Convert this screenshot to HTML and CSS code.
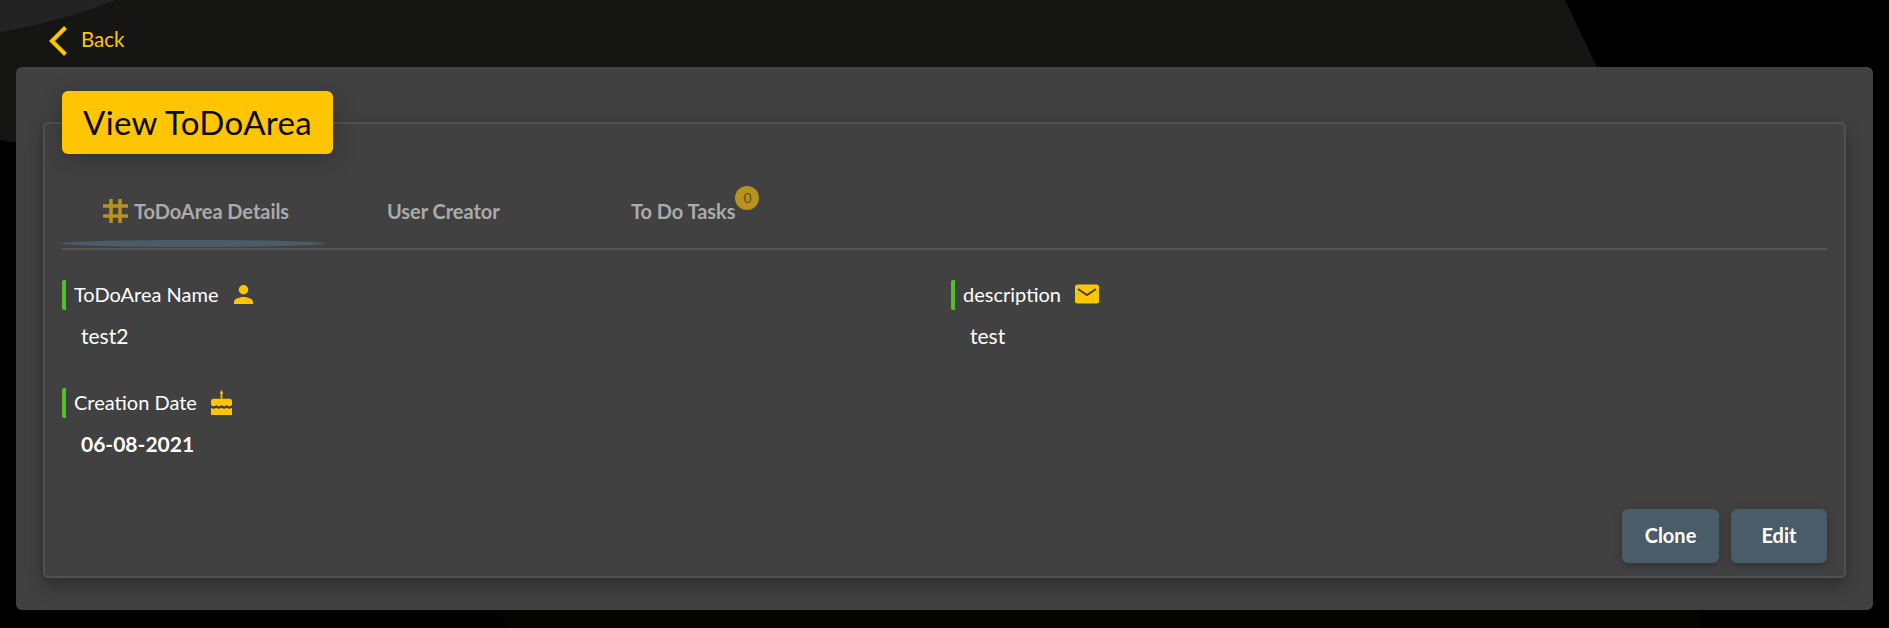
FILE: index.html
```html
<!DOCTYPE html>
<html lang="en">
<head>
<meta charset="utf-8">
<title>View ToDoArea</title>
<link rel="stylesheet" href="styles.css">
</head>
<body>
<svg class="backdrop" viewBox="0 0 1889 628" width="1889" height="628" aria-hidden="true">
  <path d="M0 0H1565L1597 67V610H495L48 147 0 140Z" fill="#151514"/>
  <path d="M495 610L510 628H1700V610Z" fill="#040403"/>
  <path d="M0 0H116C80 14 40 25 0 32Z" fill="#222322"/>
</svg>
<div class="page">
  <a class="back">
    <svg class="back-icon" viewBox="0 0 18 30" width="18" height="30"><path d="M16.500 1.500 3 15l13.500 13.500" fill="none" stroke="#ffc600" stroke-width="4.200"/></svg>
    <span>Back</span>
  </a>
  <main class="panel">
    <h1 class="title">View ToDoArea</h1>
    <section class="card">
      <nav class="tabs">
        <div class="tab tab-active">
          <svg class="tab-icon" viewBox="0 0 25 24" width="25" height="24"><path d="M8 0v24M17 0v24M0 7h25M0 17h25" fill="none" stroke="#b8931c" stroke-width="3.500"/></svg>
          <span>ToDoArea Details</span>
        </div>
        <div class="tab tab-user"><span>User Creator</span></div>
        <div class="tab tab-tasks"><span>To Do Tasks</span><b class="badge">0</b></div>
      </nav>
      <div class="fields">
        <div class="field">
          <div class="label"><span>ToDoArea Name</span>
            <svg class="icon" viewBox="4 4 16 16" width="19" height="19"><path fill="#ffc600" d="M12 12a4 4 0 1 0 0-8 4 4 0 0 0 0 8Zm0 2c-2.700 0-8 1.340-8 4v2h16v-2c0-2.660-5.300-4-8-4Z"/></svg>
          </div>
          <div class="value">test2</div>
        </div>
        <div class="field">
          <div class="label label-tight"><span>description</span>
            <svg class="icon" viewBox="0 0 24 20" width="24" height="20"><rect width="24" height="19" y="0.500" rx="2.500" fill="#ffc600"/><path d="M3 5l9 6 9-6" fill="none" stroke="#414141" stroke-width="2"/></svg>
          </div>
          <div class="value">test</div>
        </div>
        <div class="field">
          <div class="label label-tight"><span>Creation Date</span>
            <svg class="icon" viewBox="0 0 24 26" width="21" height="25" preserveAspectRatio="none"><path fill="#ffc600" d="M12 0c1 1.500 1.600 2.400 1.600 3.300a1.600 1.600 0 0 1-3.200 0C10.400 2.400 11 1.500 12 0Z"/><rect x="11" y="5" width="2" height="4" fill="#ffc600"/><path fill="#ffc600" d="M3 9h18a3 3 0 0 1 3 3v3.500c-2 2-4 2-6 0-2 2-4 2-6 0-2 2-4 2-6 0-2 2-4 2-6 0V12a3 3 0 0 1 3-3Zm-3 9.500c2 1.300 4 1.300 6 0 2 1.300 4 1.300 6 0 2 1.300 4 1.300 6 0 2 1.300 4 1.300 6 0V26H0Z"/></svg>
          </div>
          <div class="value value-strong">06-08-2021</div>
        </div>
      </div>
      <div class="actions">
        <button class="btn btn-clone">Clone</button>
        <button class="btn btn-edit">Edit</button>
      </div>
    </section>
  </main>
</div>
</body>
</html>
```
FILE: styles.css
```css
* { box-sizing: border-box; }
html, body { margin: 0; height: 100%; }
body {
  background: #000;
  font-family: "Lato", "Noto Sans", sans-serif;
  overflow: hidden;
  position: relative;
}
.backdrop { position: absolute; left: 0; top: 0; }
.page { position: relative; padding: 0 16px; }
.back {
  display: flex;
  align-items: center;
  gap: 14px;
  height: 67px;
  padding: 15px 0 0 33px;
  color: #ffc600;
  font-size: 20.500px;
}
.back span { position: relative; top: -2px; }
.back-icon { display: block; }
.panel {
  position: relative;
  height: 543px;
  background: #414141;
  border-radius: 6px;
  padding: 55px 27px 0;
}
.title {
  position: absolute;
  left: 46px;
  top: 24px;
  width: 271px;
  height: 63px;
  margin: 0;
  background: #ffc600;
  color: #0a0a0a;
  border-radius: 6px;
  font-size: 33px;
  font-weight: 400;
  letter-spacing: .35px;
  line-height: 63px;
  padding-left: 21px;
  box-shadow: 0 6px 22px rgba(0, 0, 0, .25);
  z-index: 1;
}
.card {
  height: 456px;
  border: 2px solid #505050;
  border-radius: 5px;
  padding: 0 17px;
  box-shadow: 0 8px 18px rgba(0, 0, 0, .32);
  display: flex;
  flex-direction: column;
}
.tabs {
  display: flex;
  height: 126px;
  padding-top: 33px;
  border-bottom: 2px solid #565656;
  flex: none;
  align-items: center;
  color: #ababab;
  font-size: 20px;
  font-weight: 700;
  letter-spacing: -.05px;
}
.tab { display: flex; align-items: center; position: relative; height: 91px; padding-top: 16px; }
.tab-active { width: 262px; padding-left: 41px; gap: 6px; }
.tab-active::after {
  content: "";
  position: absolute;
  left: 0;
  right: 0;
  bottom: 1px;
  height: 7px;
  border-radius: 50%;
  background: #495c68;
}
.tab-user { width: 245px; padding-left: 63px; }
.tab-tasks { padding-left: 62px; }
.tab-icon { display: block; }
.badge {
  position: absolute;
  right: -24px;
  top: 29px;
  width: 24px;
  height: 24px;
  border-radius: 50%;
  background: #b8931c;
  color: #5c4f1f;
  font-size: 14px;
  font-weight: 400;
  line-height: 24px;
  text-align: center;
}
.fields {
  display: grid;
  grid-template-columns: 889px 1fr;
  grid-auto-rows: 108px;
  padding-top: 30px;
  flex: none;
}
.label {
  display: flex;
  align-items: center;
  gap: 16px;
  height: 30px;
  border-left: 4px solid #52bf2c;
  border-radius: 2px;
  padding: 0 0 2px 8px;
  color: #fff;
  font-size: 20px;
}
.label-tight { gap: 14px; }
.icon { display: block; }
.value {
  color: #fff;
  font-size: 21px;
  padding: 11px 0 0 19px;
  line-height: 30px;
}
.value-strong { font-weight: 700; }
.actions {
  margin-top: auto;
  padding-bottom: 13px;
  display: flex;
  justify-content: flex-end;
  gap: 12px;
}
.btn {
  height: 54px;
  border: 0;
  border-radius: 6px;
  background: #4a5c67;
  color: #fff;
  font: 700 20px "Lato", "Noto Sans", sans-serif;
  padding: 0 0 2px;
  box-shadow: 0 2px 8px rgba(0, 0, 0, .25);
}
.btn-clone { width: 97px; }
.btn-edit { width: 96px; }
```
